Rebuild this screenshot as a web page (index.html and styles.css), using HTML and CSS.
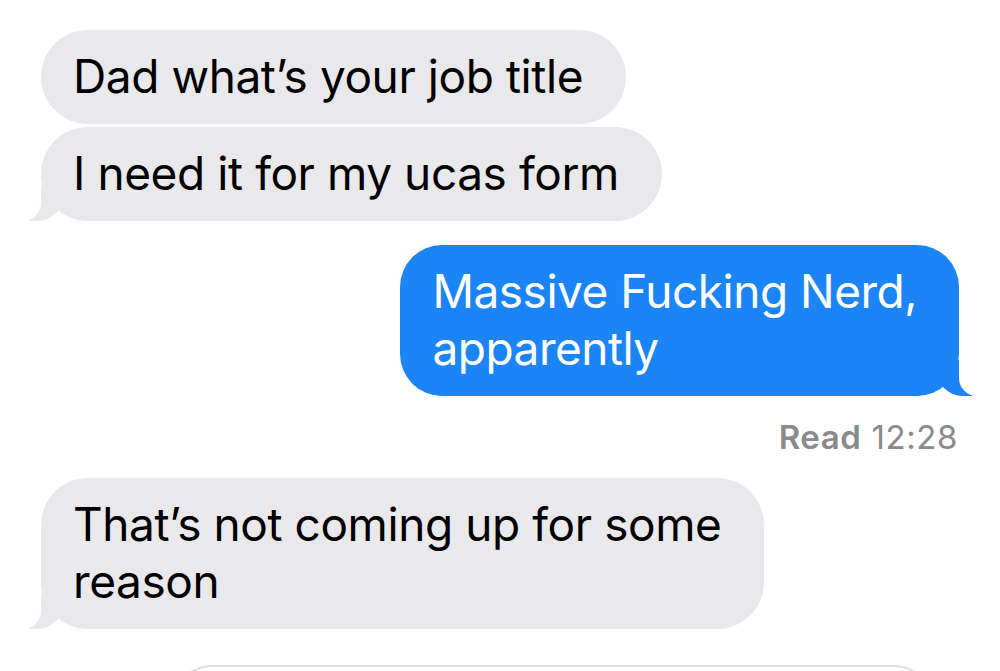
FILE: index.html
```html
<!DOCTYPE html>
<html lang="en">
<head>
<meta charset="utf-8">
<title>Messages</title>
<link rel="stylesheet" href="styles.css">
</head>
<body>
<main class="thread">
  <div class="row row-in">
    <div class="bubble bubble-gray">Dad what’s your job title</div>
  </div>
  <div class="row row-in row-tight">
    <div class="bubble bubble-gray tail-left">I need it for my ucas form</div>
  </div>
  <div class="row row-out row-gap">
    <div class="bubble bubble-blue tail-right">Massive Fucking Nerd,<br>apparently</div>
  </div>
  <div class="status"><span class="status-label">Read</span> 12:28</div>
  <div class="row row-in row-after-status">
    <div class="bubble bubble-gray tail-left">That’s not coming up for some<br>reason</div>
  </div>
  <div class="composer-clip">
    <div class="composer"></div>
  </div>
</main>
</body>
</html>
```
FILE: styles.css
```css
html, body {
  margin: 0;
  padding: 0;
  background: #ffffff;
}
body {
  width: 1000px;
  height: 671px;
  overflow: hidden;
  font-family: Inter, "Liberation Sans", sans-serif;
}
.thread {
  display: flex;
  flex-direction: column;
  padding: 30px 41px 0 41px;
}
.row {
  display: flex;
}
.row-in {
  justify-content: flex-start;
}
.row-out {
  justify-content: flex-end;
}
.row-tight {
  margin-top: 3px;
}
.row-gap {
  margin-top: 24px;
}
.row-after-status {
  margin-top: 22px;
}
.bubble {
  position: relative;
  font-size: 46px;
  line-height: 57px;
  letter-spacing: -0.42px;
  padding: 18px 43px 19px 32px;
  border-radius: 47px;
}
.bubble-gray {
  background: #e9e9eb;
  color: #000000;
}
.bubble-blue {
  background: #1b85f8;
  color: #ffffff;
  border-radius: 42px;
  padding-right: 42px;
  letter-spacing: -0.5px;
}
.tail-left::before {
  content: "";
  position: absolute;
  left: -13px;
  bottom: 0;
  width: 36px;
  height: 36px;
  background: #e9e9eb;
  border-bottom-right-radius: 27px;
}
.tail-left::after {
  content: "";
  position: absolute;
  left: -18px;
  bottom: 0;
  width: 18px;
  height: 38px;
  background: #ffffff;
  border-bottom-right-radius: 18px;
}
.tail-right::before {
  content: "";
  position: absolute;
  right: -13px;
  bottom: 0;
  width: 36px;
  height: 36px;
  background: #1b85f8;
  border-bottom-left-radius: 27px;
}
.tail-right::after {
  content: "";
  position: absolute;
  right: -18px;
  bottom: 0;
  width: 18px;
  height: 38px;
  background: #ffffff;
  border-bottom-left-radius: 18px;
}
.status {
  align-self: flex-end;
  margin-top: 22px;
  margin-right: 1px;
  font-size: 33px;
  line-height: 38px;
  letter-spacing: 0.6px;
  color: #8a8a8c;
}
.status-label {
  font-weight: 600;
}
.composer-clip {
  margin: 36px 25px 0 131px;
  height: 6px;
  overflow: hidden;
}
.composer {
  height: 80px;
  border: 2px solid #dddddf;
  border-radius: 40px;
}
```
